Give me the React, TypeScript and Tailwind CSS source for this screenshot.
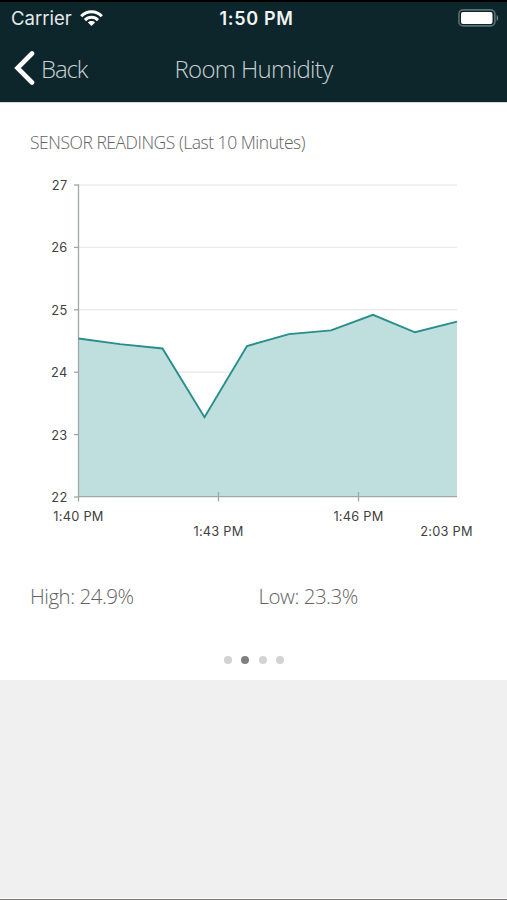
import React from 'react';

interface IReading {
  x: number;
  value: number;
}

interface ITimeLabel {
  x: number;
  y: number;
  text: string;
}

const readings: IReading[] = [
  { x: 78.5, value: 24.54 },
  { x: 120, value: 24.45 },
  { x: 162.5, value: 24.38 },
  { x: 204.5, value: 23.28 },
  { x: 247, value: 24.42 },
  { x: 289, value: 24.61 },
  { x: 331, value: 24.67 },
  { x: 373, value: 24.92 },
  { x: 415, value: 24.64 },
  { x: 457, value: 24.81 },
];

const timeLabels: ITimeLabel[] = [
  { x: 78.5, y: 521, text: '1:40 PM' },
  { x: 218.5, y: 535.5, text: '1:43 PM' },
  { x: 358.5, y: 521, text: '1:46 PM' },
  { x: 446.5, y: 535.5, text: '2:03 PM' },
];

const CHART_TOP = 170;
const levels = [27, 26, 25, 24, 23, 22];
const toY = (value: number) => 185 + (27 - value) * 62.4;

const StatusBar = () => (
  <div className="grid h-[34px] grid-cols-3 items-center border-t-2 border-black pr-[8px] pl-[11px] font-['Inter']">
    <div className="flex items-center gap-[8px]">
      <span className="text-[18.5px] leading-none text-[#e6ebec]">Carrier</span>
      <svg width="23" height="17" viewBox="0 0 23 17" fill="none" stroke="#fff" strokeWidth="3">
        <path d="M1.2 6.3C7 .3 16 .3 21.8 6.3" />
        <path d="M5 10.1C8.7 6.4 14.3 6.4 18 10.1" />
        <path d="M11.5 16L7.9 12.4C9.9 10.5 13.1 10.5 15.1 12.4Z" fill="#fff" stroke="none" />
      </svg>
    </div>
    <span className="pt-px pl-[3px] text-center text-[18px] leading-none font-semibold tracking-[0.7px] whitespace-nowrap text-[#f1f4f4]">
      1:50 PM
    </span>
    <svg className="justify-self-end" width="41" height="18" viewBox="0 0 41 18" fill="none">
      <rect x="0.9" y="0.9" width="36" height="16" rx="4.2" stroke="#5b6e71" strokeWidth="1.6" />
      <rect x="3" y="3" width="31.5" height="12" rx="2" fill="#fff" />
      <path d="M38.7 6V12C40.6 11.2 40.6 6.8 38.7 6Z" fill="#74868a" />
    </svg>
  </div>
);

const NavBar = () => (
  <div className="grid h-[68px] grid-cols-3 items-center pr-[14px] pl-[14px] text-[24px] font-light text-[#c7d0d2]">
    <div className="flex items-center gap-[6px]">
      <svg width="21" height="34" viewBox="0 0 21 34" fill="none">
        <path
          d="M18 2.5L3.5 17L18 31.5"
          stroke="#fff"
          strokeWidth="4.6"
          strokeLinecap="round"
          strokeLinejoin="miter"
        />
      </svg>
      <span className="pt-px leading-none tracking-[-1.1px]">Back</span>
    </div>
    <h1 className="pt-px text-center leading-none tracking-[-0.65px] whitespace-nowrap">Room Humidity</h1>
  </div>
);

const HumidityChart = () => {
  const line = readings.map(({ x, value }) => `${x},${toY(value)}`).join(' ');

  return (
    <svg
      className="block font-['Inter'] font-normal"
      width="507"
      height="380"
      viewBox={`0 ${CHART_TOP} 507 380`}
      fontSize="12.8"
      fill="#3f3f3f"
    >
      {levels.slice(0, 5).map((level) => (
        <line key={level} x1="79" x2="457" y1={toY(level)} y2={toY(level)} stroke="#ececec" strokeWidth="1.4" />
      ))}
      <polygon points={`78.5,497 ${line} 457,497`} fill="#bfdfde" />
      <g stroke="#a3a6a6" strokeWidth="1.3">
        <line x1="78.5" x2="78.5" y1="184.5" y2="501.5" />
        <line x1="78.5" x2="457" y1="496.7" y2="496.7" />
        {levels.map((level) => (
          <line key={level} x1="74" x2="78.5" y1={toY(level)} y2={toY(level)} />
        ))}
        <line x1="218.5" x2="218.5" y1="492" y2="501.5" />
        <line x1="358.5" x2="358.5" y1="492" y2="501.5" />
      </g>
      <polyline points={line} fill="none" stroke="#278e8b" strokeWidth="1.9" />
      {levels.map((level) => (
        <text key={level} x="67.5" y={toY(level) + 5} textAnchor="end" letterSpacing="0.3">
          {level}
        </text>
      ))}
      {timeLabels.map(({ x, y, text }) => (
        <text key={text} x={x} y={y} textAnchor="middle" letterSpacing="0.25">
          {text}
        </text>
      ))}
    </svg>
  );
};

const App = () => {
  const pages = [0, 1, 2, 3];
  const activePage = 1;

  return (
    <div className="flex h-[900px] w-[507px] flex-col overflow-hidden bg-[#f0f0f0] font-['Open_Sans',sans-serif]">
      <header className="h-[102px] bg-[#0d262c]">
        <StatusBar />
        <NavBar />
      </header>
      <main className="h-[578px] border-t border-[#d5dadb] bg-white font-light text-[#636363]">
        <h2 className="flex h-[67px] items-center pt-[11px] pl-[30px] text-[17.5px] tracking-[-0.47px]">
          SENSOR READINGS (Last 10 Minutes)
        </h2>
        <HumidityChart />
        <div className="grid h-[92px] grid-cols-2 items-center pl-[30px] text-[20.5px] tracking-[-0.48px]">
          <span>High: 24.9%</span>
          <span className="-ml-[10px]">Low: 23.3%</span>
        </div>
        <div className="flex justify-center gap-[9.5px] pt-[14px] pl-px">
          {pages.map((page) => (
            <span
              key={page}
              className={`h-[8px] w-[8px] rounded-full ${page === activePage ? 'bg-[#7f7f7f]' : 'bg-[#d3d3d3]'}`}
            />
          ))}
        </div>
      </main>
      <footer className="mt-auto h-[2px] border-t border-b border-t-white border-b-[#7a7777]" />
    </div>
  );
};

export default App;
